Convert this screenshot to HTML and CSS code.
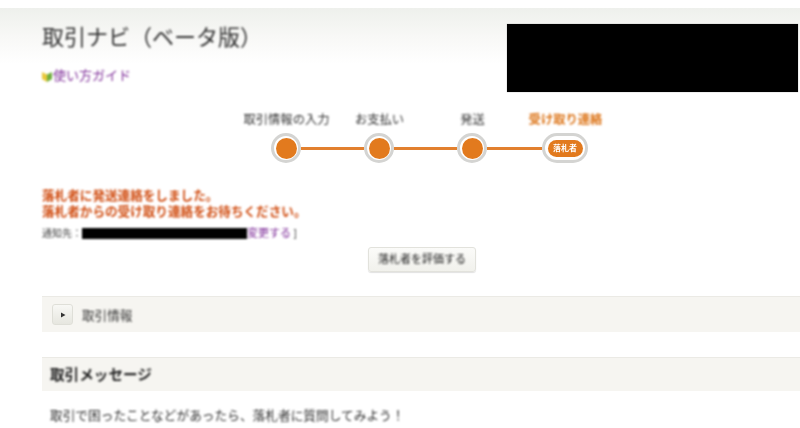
FILE: index.html
```html
<!DOCTYPE html>
<html lang="ja">
<head>
<meta charset="utf-8">
<title>取引ナビ（ベータ版）</title>
<link rel="stylesheet" href="styles.css">
</head>
<body>
<div class="page">
  <header class="head">
    <div class="head-left">
      <h1 class="title">取引ナビ（ベータ版）</h1>
      <a class="guide" href="#">
        <svg class="leaf" viewBox="0 0 10 11" width="10" height="11"><path d="M0 1 L5 3.5 V11 L0 8 Z" fill="#e8c83a"/><path d="M10 1 L5 3.5 V11 L10 8 Z" fill="#6fae3c"/></svg>使い方ガイド</a>
    </div>
    <div class="mask-box"></div>
  </header>

  <section class="steps">
    <div class="labels">
      <span class="label">取引情報の入力</span>
      <span class="label">お支払い</span>
      <span class="label">発送</span>
      <span class="label current">受け取り連絡</span>
    </div>
    <div class="track">
      <span class="node"><span class="dot"></span></span>
      <span class="link"></span>
      <span class="node"><span class="dot"></span></span>
      <span class="link"></span>
      <span class="node"><span class="dot"></span></span>
      <span class="link short"></span>
      <span class="node wide"><span class="pill">落札者</span></span>
    </div>
  </section>

  <section class="notice">
    <p class="msg">落札者に発送連絡をしました。<br>落札者からの受け取り連絡をお待ちください。</p>
    <p class="addr">通知先：<span class="mask-line"></span><a class="change" href="#">変更する</a> ]</p>
    <div class="actions"><button class="btn" type="button"><span class="btn-text">落札者を評価する</span></button></div>
  </section>

  <section class="bar info">
    <span class="toggle"><svg viewBox="0 0 6 6" width="6" height="6"><path d="M1 0.5 L5.5 3 L1 5.5 Z" fill="#333"/></svg></span>
    <span class="info-text">取引情報</span>
  </section>

  <section class="bar message-head">
    <h2 class="message-title">取引メッセージ</h2>
  </section>
  <p class="help">取引で困ったことなどがあったら、落札者に質問してみよう！</p>
</div>
</body>
</html>
```
FILE: styles.css
```css
* { box-sizing: border-box; }
html, body { margin: 0; padding: 0; background: #fff; }
body {
  width: 800px;
  height: 428px;
  overflow: hidden;
  font-family: "Liberation Sans", "Noto Sans CJK JP", sans-serif;
  color: #444;
}
.page {
  height: 428px;
  padding-top: 8px;
  overflow: hidden;
}
.head {
  display: flex;
  justify-content: space-between;
  height: 84px;
  padding: 16px 2px 0 42px;
  background: linear-gradient(#eef0ec 0, #f8f8f6 28px, #fff 56px);
}
.title {
  margin: 0;
  font-size: 22px;
  line-height: 28px;
  font-weight: 400;
  color: #333;
  filter: blur(0.8px);
}
.guide {
  display: flex;
  align-items: center;
  margin-top: 17px;
  font-size: 13px;
  line-height: 14px;
  color: #80309a;
  text-decoration: none;
  filter: blur(0.8px);
}
.leaf { margin-right: 1px; }
.mask-box {
  width: 291px;
  height: 68px;
  background: #000;
  box-shadow: 0 0 1px #999;
}
.steps {
  margin-top: 20px;
  padding-left: 240px;
}
.labels {
  display: grid;
  grid-template-columns: repeat(4, 93px);
}
.label {
  text-align: center;
  font-size: 12.3px;
  line-height: 16px;
  color: #333;
  white-space: nowrap;
  filter: blur(0.8px);
}
.current { color: #dc7418; font-weight: 700; }
.track {
  display: flex;
  align-items: center;
  margin: 5px 0 0 31px;
}
.node {
  display: flex;
  align-items: center;
  justify-content: center;
  flex: none;
  width: 30px;
  height: 30px;
  border: 3px solid #d4d4d2;
  border-radius: 15px;
  background: #fff;
  filter: blur(0.6px);
}
.dot {
  width: 21px;
  height: 21px;
  border-radius: 50%;
  background: #e27a1e;
}
.link {
  flex: none;
  width: 63px;
  height: 3px;
  background: #e2802e;
  filter: blur(0.4px);
}
.short { width: 55px; }
.wide { width: 46px; }
.pill {
  display: block;
  width: 35px;
  height: 17px;
  border-radius: 9px;
  background: #e27a1e;
  color: #fff;
  font-size: 8px;
  line-height: 17px;
  font-weight: 700;
  text-align: center;
}
.notice {
  margin-top: 25px;
  padding-left: 42px;
}
.msg {
  margin: 0;
  font-size: 12.6px;
  line-height: 16px;
  font-weight: 700;
  color: #d04c10;
  filter: blur(0.8px);
}
.addr {
  margin: 6px 0 0;
  font-size: 10px;
  line-height: 14px;
  color: #444;
  filter: blur(0.8px);
}
.mask-line {
  display: inline-block;
  width: 165px;
  height: 11px;
  vertical-align: -2px;
  background: #000;
}
.change { color: #80309a; font-size: 11px; text-decoration: none; }
.actions {
  display: flex;
  margin-top: 6px;
  padding-left: 326px;
}
.btn {
  width: 108px;
  height: 25px;
  padding: 0;
  border: 1px solid #e2e2dc;
  border-radius: 3px;
  background: linear-gradient(#fbfbf9, #f1f1ec);
  box-shadow: 0 1px 1px #e2e2e2;
  font: 11px/23px "Liberation Sans", "Noto Sans CJK JP", sans-serif;
  color: #222;
}
.btn-text { display: block; filter: blur(0.8px); }
.bar {
  display: flex;
  align-items: center;
  margin-left: 42px;
  background: #f6f5f1;
  border-top: 1px solid #ebeae5;
}
.info {
  height: 36px;
  margin-top: 24px;
  padding-left: 10px;
}
.toggle {
  display: flex;
  align-items: center;
  justify-content: center;
  width: 21px;
  height: 21px;
  border: 1px solid #dfdfd8;
  border-radius: 3px;
  background: linear-gradient(#f8f8f5, #e6e6df);
  filter: blur(0.5px);
}
.info-text {
  margin-left: 9px;
  font-size: 12.6px;
  color: #333;
  filter: blur(0.8px);
}
.message-head {
  height: 34px;
  margin-top: 25px;
  padding: 0 0 3px 8px;
}
.message-title {
  margin: 0;
  font-size: 14.6px;
  font-weight: 700;
  color: #222;
  filter: blur(0.8px);
}
.help {
  margin: 17px 0 0 50px;
  font-size: 12.7px;
  line-height: 16px;
  color: #333;
  filter: blur(0.8px);
}
```
